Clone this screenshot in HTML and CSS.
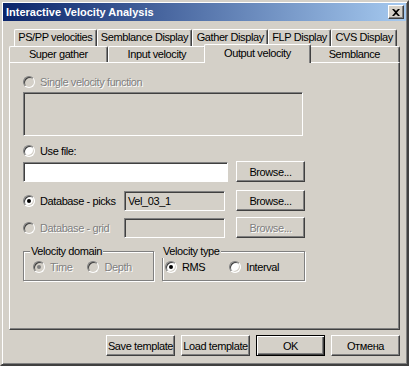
FILE: index.html
```html
<!DOCTYPE html>
<html lang="en">
<head>
    <meta charset="UTF-8">
    <title>Interactive Velocity Analysis</title>
    <link rel="stylesheet" href="styles.css">
</head>
<body>

<div class="window">
    <div class="titlebar">
        <span class="title">Interactive Velocity Analysis</span>
        <button class="close-btn" type="button">
            <svg width="8" height="7" viewBox="0 0 8 7"><path d="M0 0h2l2 2 2-2h2L5 3.5 8 7H6L4 5 2 7H0l3-3.5z" fill="#000"/></svg>
        </button>
    </div>

    <div class="content">
        <div class="tabs">
            <div class="tab-row row-back">
                <div class="tab">PS/PP velocities</div>
                <div class="tab">Semblance Display</div>
                <div class="tab">Gather Display</div>
                <div class="tab">FLP Display</div>
                <div class="tab">CVS Display</div>
            </div>
            <div class="tab-row row-front">
                <div class="tab">Super gather</div>
                <div class="tab">Input velocity</div>
                <div class="tab active">Output velocity</div>
                <div class="tab">Semblance</div>
            </div>
        </div>

        <div class="panel">
            <label class="radio disabled"><span class="dot"></span>Single velocity function</label>
            <div class="list-box"></div>

            <label class="radio use-file"><span class="dot"></span>Use file:</label>
            <div class="field-row first">
                <input class="edit file-edit" type="text">
                <button class="btn" type="button">Browse...</button>
            </div>

            <div class="field-row picks">
                <label class="radio checked"><span class="dot"></span>Database - picks</label>
                <div class="edit readonly">Vel_03_1</div>
                <button class="btn" type="button">Browse...</button>
            </div>

            <div class="field-row grid">
                <label class="radio disabled"><span class="dot"></span>Database - grid</label>
                <div class="edit readonly"></div>
                <button class="btn disabled" type="button">Browse...</button>
            </div>

            <div class="groups">
                <fieldset class="group domain">
                    <legend>Velocity domain</legend>
                    <div class="options">
                        <label class="radio disabled checked"><span class="dot"></span>Time</label>
                        <label class="radio disabled"><span class="dot"></span>Depth</label>
                    </div>
                </fieldset>
                <fieldset class="group type">
                    <legend>Velocity type</legend>
                    <div class="options">
                        <label class="radio checked"><span class="dot"></span>RMS</label>
                        <label class="radio"><span class="dot"></span>Interval</label>
                    </div>
                </fieldset>
            </div>
        </div>

        <div class="footer">
            <button class="btn" type="button">Save template</button>
            <button class="btn" type="button">Load template</button>
            <button class="btn default" type="button">OK</button>
            <button class="btn" type="button">Отмена</button>
        </div>
    </div>
</div>

</body>
</html>
```

FILE: styles.css
```css
body, html {
    margin: 0;
    padding: 0;
    background-color: #d4d0c8;
    font-family: "Liberation Sans", Arial, sans-serif;
    font-size: 11px;
    letter-spacing: -0.4px;
    color: #000;
}

.window {
    width: 409px;
    height: 366px;
    box-sizing: border-box;
    padding: 1px;
    border: 2px solid;
    border-color: #d4d0c8 #404040 #404040 #d4d0c8;
    box-shadow: inset 1px 1px 0 #fff, inset -1px -1px 0 #808080;
    background-color: #d4d0c8;
}

.titlebar {
    height: 18px;
    display: flex;
    align-items: center;
    padding: 0 2px 0 3px;
    background: linear-gradient(to right, #0a246a, #a6caf0);
}

.title {
    flex: 1;
    color: #fff;
    font-weight: bold;
    font-size: 11px;
    letter-spacing: 0;
}

.close-btn {
    width: 16px;
    height: 14px;
    padding: 0;
    display: flex;
    align-items: center;
    justify-content: center;
    background-color: #d4d0c8;
    border: 1px solid;
    border-color: #fff #404040 #404040 #fff;
    box-shadow: inset -1px -1px 0 #808080;
}

.content {
    padding: 0 6px;
}

.tabs {
    margin-top: 8px;
}

.tab-row {
    display: flex;
}

.row-back {
    height: 17px;
    margin: 0 3px 0 5px;
}

.row-front {
    height: 16px;
}

.tab {
    flex: 1 1 auto;
    min-width: 0;
    padding: 0 2px;
    text-align: center;
    line-height: 15px;
    white-space: nowrap;
    border-top: 1px solid #fff;
    border-left: 1px solid #fff;
    border-right: 1px solid #404040;
    border-radius: 2px 2px 0 0;
    box-shadow: inset -1px 0 0 #808080;
    background-color: #d4d0c8;
}

.tab.active {
    position: relative;
    z-index: 1;
    height: 18px;
    margin: -2px -2px 0 -2px;
    line-height: 16px;
}

.panel {
    height: 268px;
    box-sizing: border-box;
    padding: 12px 0 0 13px;
    border: 1px solid;
    border-color: #fff #404040 #404040 #fff;
    box-shadow: inset -1px -1px 0 #808080;
}

.radio {
    display: flex;
    align-items: center;
    height: 13px;
    white-space: nowrap;
}

.dot {
    position: relative;
    width: 12px;
    height: 12px;
    box-sizing: border-box;
    margin-right: 5px;
    border-radius: 50%;
    border: 1px solid;
    border-color: #808080 #fff #fff #808080;
    box-shadow: inset 1px 1px 0 #404040, inset -1px -1px 0 #d4d0c8;
    background-color: #fff;
    flex: none;
}

.radio.checked .dot::after {
    content: "";
    position: absolute;
    left: 3px;
    top: 3px;
    width: 4px;
    height: 4px;
    border-radius: 50%;
    background-color: #000;
}

.radio.disabled {
    color: #808080;
    text-shadow: 1px 1px 0 #fff;
}

.radio.disabled .dot {
    background-color: #d4d0c8;
}

.radio.disabled.checked .dot::after {
    background-color: #808080;
}

.list-box {
    width: 280px;
    height: 44px;
    margin-top: 4px;
    box-sizing: border-box;
    border: 1px solid;
    border-color: #808080 #fff #fff #808080;
    box-shadow: inset 1px 1px 0 #404040;
}

.use-file {
    margin-top: 8px;
}

.field-row {
    display: flex;
    align-items: center;
    width: 282px;
    height: 21px;
}

.field-row.first {
    margin-top: 4px;
}

.field-row.picks {
    margin-top: 8px;
}

.field-row.grid {
    margin-top: 6px;
}

.field-row .radio {
    width: 101px;
}

.edit {
    font: inherit;
    height: 20px;
    box-sizing: border-box;
    padding: 0 3px;
    line-height: 18px;
    border: 1px solid;
    border-color: #808080 #fff #fff #808080;
    box-shadow: inset 1px 1px 0 #404040;
    background-color: #fff;
}

.file-edit {
    width: 205px;
    outline: none;
}

.edit.readonly {
    width: 101px;
    background-color: #d4d0c8;
}

.btn {
    font: inherit;
    width: 69px;
    height: 21px;
    margin-left: auto;
    padding: 0;
    white-space: nowrap;
    letter-spacing: -0.4px;
    color: #000;
    background-color: #d4d0c8;
    border: 1px solid;
    border-color: #fff #404040 #404040 #fff;
    box-shadow: inset -1px -1px 0 #808080;
}

.btn.disabled {
    color: #808080;
    text-shadow: 1px 1px 0 #fff;
}

.btn.default {
    border-color: #000;
    box-shadow: inset 1px 1px 0 #fff, inset -1px -1px 0 #404040, inset -2px -2px 0 #808080;
}

.groups {
    display: flex;
    gap: 8px;
    margin-top: 7px;
}

.group {
    margin: 0;
    height: 36px;
    box-sizing: border-box;
    padding: 0 0 0 9px;
    border: 1px solid #808080;
    box-shadow: 1px 1px 0 #fff, inset 1px 1px 0 #fff;
}

.group legend {
    padding: 0 1px;
    margin-left: -3px;
    line-height: 13px;
    background-color: #d4d0c8;
}

.group.domain {
    width: 131px;
}

.group.type {
    width: 143px;
    padding-left: 2px;
}

.options {
    display: flex;
    margin-top: 2px;
}

.domain .options {
    gap: 15px;
}

.type .options {
    gap: 24px;
}

.footer {
    display: flex;
    justify-content: flex-end;
    gap: 6px;
    margin-top: 5px;
}

.footer .btn {
    margin-left: 0;
}
```
